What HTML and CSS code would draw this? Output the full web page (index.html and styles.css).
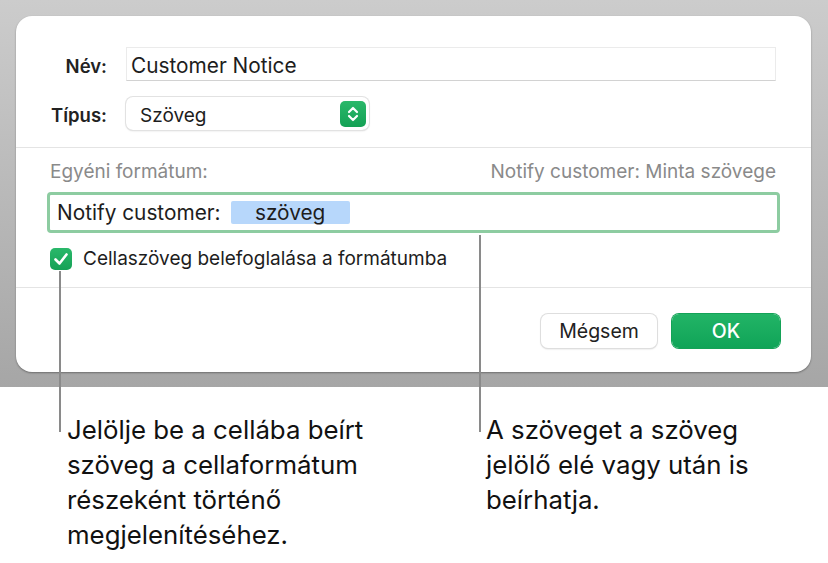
FILE: index.html
```html
<!DOCTYPE html>
<html lang="hu">
<head>
    <meta charset="UTF-8">
    <meta name="viewport" content="width=device-width, initial-scale=1.0">
    <title>Egyéni formátum</title>
    <link rel="stylesheet" href="styles.css">
</head>
<body>
    <div class="page">
        <div class="backdrop">
            <div class="dialog">
                <div class="form-top">
                    <label class="label">Név:</label>
                    <div class="name-field">Customer Notice</div>
                    <label class="label">Típus:</label>
                    <div class="popup">
                        <span>Szöveg</span>
                        <span class="stepper">
                            <svg width="26" height="26" viewBox="0 0 26 26">
                                <path d="M9 11 L13 7 L17 11 M9 15 L13 19 L17 15" fill="none" stroke="#fff" stroke-width="2.2" stroke-linecap="round" stroke-linejoin="round"/>
                            </svg>
                        </span>
                    </div>
                </div>
                <div class="form-mid">
                    <div class="format-head">
                        <span>Egyéni formátum:</span>
                        <span>Notify customer: Minta szövege</span>
                    </div>
                    <div class="format-field">
                        <span>Notify customer:</span>
                        <span class="token">szöveg</span>
                    </div>
                    <div class="check-row">
                        <span class="checkbox">
                            <svg width="22" height="22" viewBox="0 0 22 22">
                                <path d="M5.5 11.5 L9.5 15.5 L16.5 6.5" fill="none" stroke="#fff" stroke-width="2.6" stroke-linecap="round" stroke-linejoin="round"/>
                            </svg>
                        </span>
                        <span>Cellaszöveg belefoglalása a formátumba</span>
                    </div>
                </div>
                <div class="actions">
                    <button class="btn">Mégsem</button>
                    <button class="btn btn-ok">OK</button>
                </div>
            </div>
        </div>

        <div class="callouts">
            <p class="callout callout-left">Jelölje be a cellába beírt szöveg a cellaformátum részeként történő megjelenítéséhez.</p>
            <p class="callout callout-right">A szöveget a szöveg jelölő elé vagy után is beírhatja.</p>
        </div>

        <div class="leader leader-left"></div>
        <div class="leader leader-right"></div>
    </div>
</body>
</html>
```

FILE: styles.css
```css
body {
    margin: 0;
    background: #fff;
    font-family: Inter, "Liberation Sans", sans-serif;
    color: #1d1d1d;
}
.page {
    position: relative;
    width: 828px;
    height: 563px;
    overflow: hidden;
}
.backdrop {
    height: 387px;
    box-sizing: border-box;
    padding: 16px 17px 0 16px;
    background: linear-gradient(#cccccc, #a6a6a6);
}
.dialog {
    height: 356px;
    background: #fff;
    border-radius: 16px;
    box-shadow: 0 1px 2px rgba(0, 0, 0, 0.35);
    display: flex;
    flex-direction: column;
}
.form-top {
    display: grid;
    grid-template-columns: 91px 1fr;
    column-gap: 19px;
    row-gap: 16px;
    align-items: center;
    padding: 31px 35px 17px 0;
    border-bottom: 1px solid #e4e4e4;
}
.label {
    text-align: right;
    font-weight: 600;
    font-size: 18.5px;
    padding-top: 3px;
    color: #222;
}
.name-field {
    height: 34px;
    box-sizing: border-box;
    border: 1px solid #ebebeb;
    border-bottom-color: #d2d2d2;
    padding: 1px 4px 0;
    font-size: 20.8px;
    line-height: 33px;
}
.popup {
    width: 243px;
    height: 33px;
    box-sizing: border-box;
    display: flex;
    align-items: center;
    justify-content: space-between;
    padding: 0 3px 0 14px;
    border-radius: 7px;
    box-shadow: 0 0 0 1px #e2e2e2, 0 1px 2px rgba(0, 0, 0, 0.15);
    font-size: 19px;
}
.popup span:first-child {
    padding-top: 3px;
}
.stepper {
    width: 26px;
    height: 26px;
    border-radius: 5px;
    background: linear-gradient(#2ab86a, #14a155);
}
.stepper svg {
    display: block;
}
.form-mid {
    padding: 12px 31px 17px 31px;
    border-bottom: 1px solid #e4e4e4;
}
.format-head {
    display: flex;
    justify-content: space-between;
    padding: 0 4px 0 3px;
    font-size: 19px;
    color: #8a8a8a;
}
.format-field {
    margin-top: 9px;
    height: 41px;
    box-sizing: border-box;
    border: 3px solid #8dcca1;
    border-radius: 4px;
    display: flex;
    align-items: center;
    gap: 10px;
    padding: 0 7px;
    font-size: 20.8px;
}
.token {
    width: 119px;
    height: 23px;
    line-height: 23px;
    text-align: center;
    background: #b7d7fb;
    border-radius: 2px;
}
.check-row {
    margin-top: 14px;
    display: flex;
    align-items: center;
    gap: 11px;
    padding-left: 3px;
    font-size: 19px;
}
.checkbox {
    width: 22px;
    height: 22px;
    border-radius: 5px;
    background: linear-gradient(#2ab86a, #15a156);
}
.checkbox svg {
    display: block;
}
.actions {
    display: flex;
    justify-content: flex-end;
    gap: 15px;
    padding: 26px 31px 0 0;
}
.btn {
    height: 34px;
    width: 116px;
    border: none;
    border-radius: 7px;
    background: #fff;
    box-shadow: 0 0 0 1px #dedede, 0 1px 2px rgba(0, 0, 0, 0.2);
    font-family: inherit;
    font-size: 19.5px;
    color: #222;
}
.btn-ok {
    width: 108px;
    background: linear-gradient(#22b466, #10a458);
    box-shadow: 0 0 0 1px #14a257;
    color: #fff;
    font-weight: 500;
}
.callouts {
    display: flex;
    padding-top: 25px;
}
.callout {
    margin: 0;
    font-size: 25.8px;
    line-height: 35px;
    color: #111;
}
.callout-left {
    width: 340px;
    margin-left: 67px;
}
.callout-right {
    width: 310px;
    margin-left: 79px;
}
.leader {
    position: absolute;
    width: 2px;
    background: #8a8a8a;
}
.leader-left {
    left: 59px;
    top: 271px;
    height: 161px;
}
.leader-right {
    left: 479px;
    top: 235px;
    height: 197px;
}
```
